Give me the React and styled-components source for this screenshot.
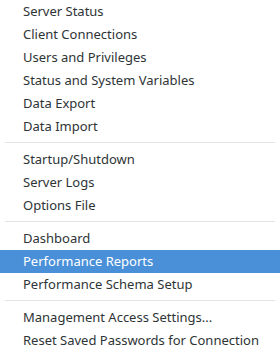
import React from "react";
import styled, { createGlobalStyle } from "styled-components";

const GlobalStyle = createGlobalStyle`
  html, body {
    margin: 0;
    padding: 0;
    background: #ffffff;
  }
  body {
    font-family: "Noto Sans", "DejaVu Sans", sans-serif;
  }
`;

const groups = [
  ["Server Status", "Client Connections", "Users and Privileges", "Status and System Variables", "Data Export", "Data Import"],
  ["Startup/Shutdown", "Server Logs", "Options File"],
  ["Dashboard", "Performance Reports", "Performance Schema Setup"],
  ["Management Access Settings...", "Reset Saved Passwords for Connection"]
];

export default function App() {
  return (
    <>
      <GlobalStyle />
      <Menu>
        {groups.map((items, gi) => (
          <React.Fragment key={gi}>
            {gi > 0 && <Separator />}
            {items.map(label => (
              <Item key={label} active={label === "Performance Reports"}>
                {label}
              </Item>
            ))}
          </React.Fragment>
        ))}
      </Menu>
    </>
  );
}

const Menu = styled.div`
  width: 280px;
  height: 352px;
  display: flex;
  flex-direction: column;
  background: #ffffff;
  overflow: hidden;
`;

const Item = styled.div.withConfig({ shouldForwardProp: p => p !== "active" })`
  height: 23px;
  box-sizing: border-box;
  flex-shrink: 0;
  display: flex;
  align-items: center;
  padding: 0 0 1px 23px;
  font-size: 13px;
  color: ${p => (p.active ? "#ffffff" : "#2e3436")};
  background: ${p => (p.active ? "#4a90d9" : "transparent")};
  white-space: nowrap;
`;

const Separator = styled.div`
  height: 1px;
  flex-shrink: 0;
  margin: 4px 5px 5px;
  background: #e3e3e3;
`;
